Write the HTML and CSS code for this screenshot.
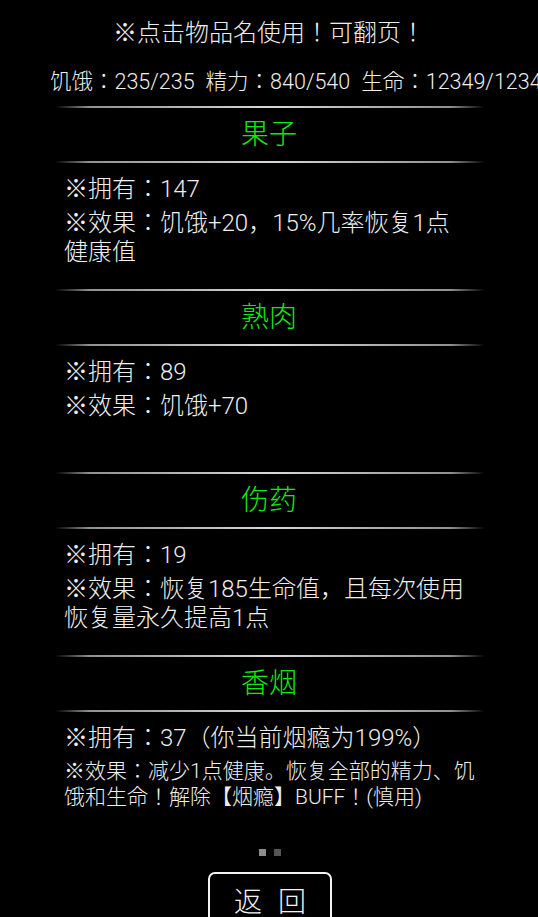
FILE: index.html
```html
<!DOCTYPE html>
<html lang="ja">
<head>
<meta charset="utf-8">
<title>物品</title>
<link rel="stylesheet" href="styles.css">
</head>
<body>
<div class="page">
  <div class="tip">※点击物品名使用！可翻页！</div>
  <div class="stats">
    <span>饥饿：235/235</span>
    <span>精力：840/540</span>
    <span>生命：12349/12349</span>
  </div>

  <section class="item">
    <div class="rule"></div>
    <div class="name">果子</div>
    <div class="rule"></div>
    <div class="body">
      <p>※拥有：147</p>
      <p>※效果：饥饿+20，15%几率恢复1点<br>健康值</p>
    </div>
  </section>

  <section class="item">
    <div class="rule"></div>
    <div class="name">熟肉</div>
    <div class="rule"></div>
    <div class="body">
      <p>※拥有：89</p>
      <p>※效果：饥饿+70</p>
    </div>
  </section>

  <section class="item">
    <div class="rule"></div>
    <div class="name">伤药</div>
    <div class="rule"></div>
    <div class="body">
      <p>※拥有：19</p>
      <p>※效果：恢复185生命值，且每次使用<br>恢复量永久提高1点</p>
    </div>
  </section>

  <section class="item">
    <div class="rule"></div>
    <div class="name">香烟</div>
    <div class="rule"></div>
    <div class="body">
      <p>※拥有：37（你当前烟瘾为199%）</p>
      <p class="small">※效果：减少1点健康。恢复全部的精力、饥<br>饿和生命！解除【烟瘾】BUFF！(慎用)</p>
    </div>
  </section>

  <div class="dots">
    <span class="dot on"></span>
    <span class="dot"></span>
  </div>

  <div class="actions">
    <button class="back"><span>返</span><span>回</span></button>
  </div>
</div>
</body>
</html>
```

FILE: styles.css
```css
html, body {
  margin: 0;
  padding: 0;
  background: #000;
}

body {
  width: 538px;
  height: 917px;
  overflow: hidden;
  color: #eeeeee;
  font-family: "Roboto", "Noto Sans CJK JP", sans-serif;
  font-weight: 300;
}

.page {
  display: flex;
  flex-direction: column;
}

.tip {
  margin-top: 18px;
  font-size: 24px;
  line-height: 30px;
  text-align: center;
}

.stats {
  margin-top: 21px;
  padding-left: 50px;
  display: flex;
  gap: 11px;
  white-space: nowrap;
  font-size: 21.5px;
  line-height: 26px;
  height: 26px;
  overflow: hidden;
}

.stats span {
  flex: none;
}

.item {
  display: flex;
  flex-direction: column;
  height: 183px;
}

.item:first-of-type {
  margin-top: 11px;
}

.rule {
  margin-left: 55px;
  width: 430px;
  height: 2px;
  flex: none;
  background: linear-gradient(to right,
    rgba(200,200,200,0) 0%,
    rgba(170,170,170,0.85) 8%,
    #d8d8d8 50%,
    rgba(170,170,170,0.85) 92%,
    rgba(200,200,200,0) 100%);
}

.name {
  height: 53px;
  line-height: 53px;
  text-align: center;
  font-size: 28px;
  color: #14e814;
}

.body {
  padding: 12px 0 0 64px;
}

.body p {
  margin: 0 0 5px;
  font-size: 24px;
  line-height: 29px;
  white-space: nowrap;
}

.body p.small {
  font-size: 21px;
  line-height: 26px;
}

.dots {
  margin-top: 11px;
  display: flex;
  justify-content: center;
  gap: 8px;
  padding-left: 2px;
}

.dot {
  width: 7px;
  height: 7px;
  background: #555;
}

.dot.on {
  background: #8c8c8c;
}

.actions {
  margin-top: 16px;
  display: flex;
  justify-content: center;
  padding-left: 2px;
}

.back {
  width: 124px;
  height: 56px;
  box-sizing: border-box;
  border: 2px solid #f2f2f2;
  border-radius: 7px;
  background: #000;
  color: #f2f2f2;
  font-family: "Roboto", "Noto Sans CJK JP", sans-serif;
  font-weight: 300;
  font-size: 28px;
  display: flex;
  align-items: center;
  justify-content: center;
  gap: 16px;
  padding: 0;
}
```
